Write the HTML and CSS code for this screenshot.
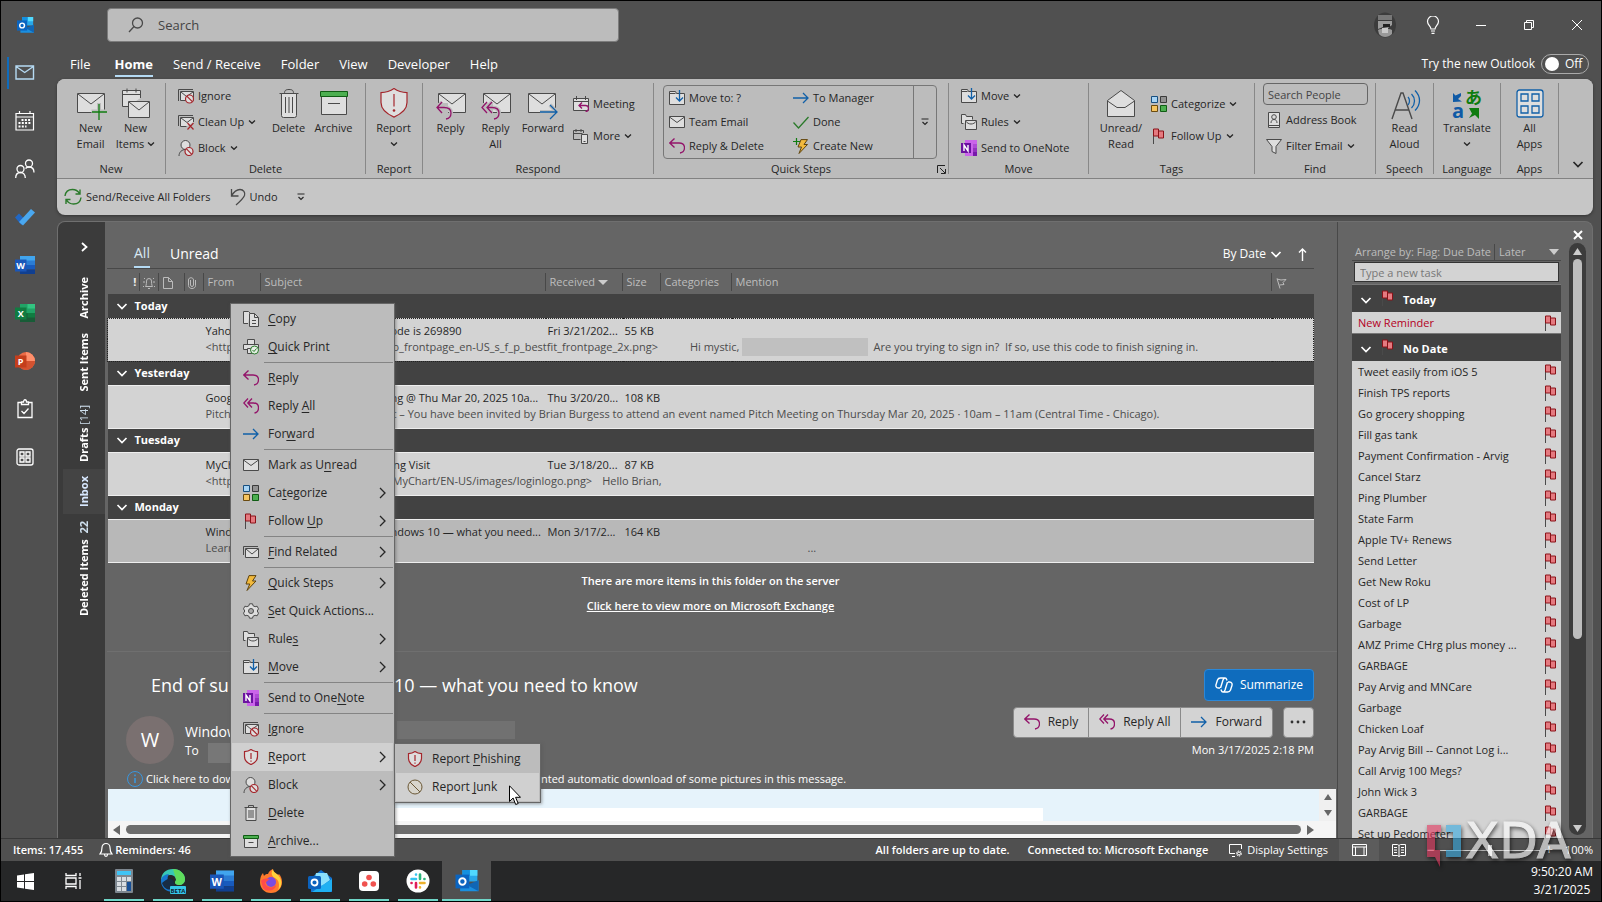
FILE: index.html
```html
<!DOCTYPE html>
<html lang="en">
<head>
<meta charset="utf-8">
<title>Inbox - Outlook</title>
<link rel="stylesheet" href="styles.css">
</head>
<body>
<svg class="defs" aria-hidden="true">
  <symbol id="env" viewBox="0 0 16 16"><path d="M.5 2.500h15v11H.5z" class="f"/><path d="M.5 3l7.500 5.500L15.500 3" class="n"/></symbol>
  <symbol id="reply" viewBox="0 0 16 16"><path d="M5.500 .5L.8 5l4.700 4.500M1 5h9c3.500 0 5.500 2 5.500 4.700 0 3-1.500 4.800-4.500 5.300" class="mg"/></symbol>
  <symbol id="replyall" viewBox="0 0 16 16"><path d="M5 .5L.8 5 5 9.500M9 .5L4.800 5 9 9.500M5 5h5.500c3 0 5 2 5 4.700 0 3-1.500 4.800-4 5.300" class="mg"/></symbol>
  <symbol id="fwd" viewBox="0 0 16 16"><path d="M0 8h15M10 3l5 5-5 5" class="bl"/></symbol>
  <symbol id="flag" viewBox="0 0 16 16"><path d="M2.500 1v15" class="n"/><path d="M2.500 1h5v7h-5zM7.500 3h5v7h-5z" class="rf"/></symbol>
  <symbol id="cats" viewBox="0 0 16 16"><path d="M.5.500h6v6h-6z" fill="#a8d4f5" stroke="#174f80"/><path d="M9.500.500h6v6h-6z" fill="#929292" stroke="#3a3a3a"/><path d="M.5 9.500h6v6h-6z" fill="#f5c460" stroke="#6a4b10"/><path d="M9.500 9.500h6v6h-6z" fill="#4caf50" stroke="#105c14"/></symbol>
  <symbol id="shield" viewBox="0 0 16 16"><path d="M8 .6c2 1.500 4 2 6.500 2v5c0 4-3 6.500-6.500 8-3.500-1.500-6.500-4-6.500-8v-5c2.500 0 4.500-.5 6.500-2z" class="rd" fill="#dedede"/><path d="M8 4v6M8 11.500v1.200" class="rd"/></symbol>
  <symbol id="shieldbig" viewBox="0 0 28 30"><path d="M14 .6c3.500 2.500 7 4 13 4v10c0 7-6 11.500-13 14.500C7 26.100 1 21.600 1 14.600v-10c6 0 9.500-1.500 13-4z" class="rd" fill="#dedede"/><path d="M14 6v12.500" class="rd" stroke-width="2"/><circle cx="14" cy="22.500" r="1.300" fill="#a4262c"/></symbol>
  <symbol id="ignore" viewBox="0 0 16 16"><path d="M.5 13V1.500H15" class="n"/><path d="M2.500 3.500h13v9h-13z" class="f"/><path d="M3 4l5.500 4.500L15 4" class="n"/><circle cx="11.500" cy="11" r="4" class="rd" fill="#dedede"/><path d="M8.800 8.200l5.500 5.500" class="rd"/></symbol>
  <symbol id="clean" viewBox="0 0 16 16"><path d="M.5 12V1.500H15" class="n"/><path d="M15.500 8V3.500h-13v9h6" class="f"/><path d="M3 4l6 4.500L15 4" class="n"/><path d="M9.500 9l6 6.500M15.500 9l-6 6.500" class="rd"/></symbol>
  <symbol id="block" viewBox="0 0 16 16"><circle cx="7.500" cy="5" r="4.500" class="f"/><path d="M1 16c0-4 3-6.500 6.500-6.500" class="n"/><circle cx="11" cy="11.500" r="4" class="rd" fill="#dedede"/><path d="M8.200 8.700l5.600 5.600" class="rd"/></symbol>
  <symbol id="trash" viewBox="0 0 16 16"><path d="M5.500 2.500V.5h5v2M1.500 2.500h13" class="n"/><path d="M3 2.500h10v13H3z" class="f"/><path d="M6 5v8M8 5v8M10 5v8" class="n"/></symbol>
  <symbol id="trashbig" viewBox="0 0 20 30"><path d="M5.500 4.500c0-3 1-4 4.500-4s4.500 1 4.500 4M.5 4.500h19" class="n"/><path d="M2.500 4.500h15v22a2 2 0 0 1-2 2h-11a2 2 0 0 1-2-2z" class="f"/><path d="M6.500 8v16M10 8v16M13.500 8v16" class="n"/></symbol>
  <symbol id="arch" viewBox="0 0 16 16"><path d="M1.500 5.500h13v9h-13z" class="f"/><path d="M.5 2.500h15v3H.5z" fill="#4caf50" stroke="#105c14"/><path d="M5.500 9.500h5" class="n"/></symbol>
  <symbol id="archbig" viewBox="0 0 28 28"><path d="M1.500 7.500h25v18h-25z" class="f"/><path d="M.5 2.500h27v5H.5z" fill="#4caf50" stroke="#105c14"/><path d="M8 14.500h12" class="n"/></symbol>
  <symbol id="moveto" viewBox="0 0 16 16"><path d="M.5 14.500V1.500h6l1 2h8v11z" class="f"/><path d="M.5 3.500h6" class="n"/><path d="M10.500 0v11M7 7.500l3.500 3.500L14 7.500" class="bl"/></symbol>
  <symbol id="rules" viewBox="0 0 16 16"><path d="M2.500 9.500h-2v-9h4l1 2h6v3" class="f"/><path d="M4.500 6.500h11v9h-11z" class="f"/><path d="M4.500 7c3 4 8 4 11 0" class="n"/></symbol>
  <symbol id="onenote" viewBox="0 0 16 16"><path d="M4 0h12v16H4z" fill="#ca64ea"/><path d="M12 4h4v4h-4z" fill="#ae4bd5"/><path d="M12 8h4v4h-4z" fill="#9332bf"/><path d="M12 12h4v4h-4z" fill="#7719aa"/><path d="M0 3h10v10H0z" fill="#6b12a0"/><path d="M3 11V5l4 6V5" fill="none" stroke="#fff" stroke-width="1.400"/></symbol>
  <symbol id="bolt" viewBox="0 0 16 16"><path d="M6 .6h7L9.500 6h3.500L4 15.500 6.800 9H3z" fill="#f2b93c" stroke="#5e430d"/></symbol>
  <symbol id="boltplus" viewBox="0 0 16 16"><path d="M8 1.600h6.500L11 6.500h3.500L6 15.500 8.500 9H5z" fill="#f2b93c" stroke="#5e430d"/><path d="M0 3.500h7M3.500 0v7" stroke="#107c10" stroke-width="1.200"/></symbol>
  <symbol id="check" viewBox="0 0 16 16"><path d="M.5 8.500L5.500 14 15.500 3" fill="none" stroke="#2b7a2b" stroke-width="1.300"/></symbol>
  <symbol id="meeting" viewBox="0 0 16 16"><path d="M.5 2.500h15v12H.5zM.5 5.500h15M3.500 0v4M12.500 0v4" class="f"/><path d="M9 6.500L6 9.500l3 3M6.500 9.500h6c2 0 3 1 3 3s-1 3-3 3" class="mg"/></symbol>
  <symbol id="moreic" viewBox="0 0 16 16"><path d="M7.500 11.500h-7v-9h10V5M.5 5.500h9M3 1v3M8 1v3" class="n"/><path d="M8.500 6.500h6v9h-6z" class="f"/><path d="M10.500 13.500h2" class="n"/></symbol>
  <symbol id="book" viewBox="0 0 16 16"><path d="M2.500.500h11v15h-11z" class="f"/><path d="M2.500 13.500h11M5 11c0-2 1-3.500 3-3.500s3 1.500 3 3.500" class="n"/><circle cx="8" cy="5" r="2.300" class="n"/></symbol>
  <symbol id="funnel" viewBox="0 0 16 16"><path d="M.5 1.500h15L10 8.500v7l-4-2v-5z" class="f"/></symbol>
  <symbol id="copy" viewBox="0 0 16 16"><path d="M5 12.500H.5V.5h5L7 2" class="f"/><path d="M6.500 2.500h5l4 4v9h-9z" class="f"/><path d="M11.500 2.500v4h4M9 9.500h4M9 12.500h4" class="n"/></symbol>
  <symbol id="print" viewBox="0 0 16 16"><path d="M4.500 5V.5h7V5M4 10.500H.5v-5h15V10" class="f"/><path d="M4.500 9.500h7v5h-7z" class="f"/><circle cx="11.500" cy="11" r="4" fill="#e5efe5" stroke="#2b7a2b"/><path d="M9.500 11l1.500 1.500 2.500-3" fill="none" stroke="#2b7a2b"/></symbol>
  <symbol id="related" viewBox="0 0 16 16"><path d="M.5 11V2.500H15" class="n"/><path d="M2.500 4.500h13v9h-13z" class="f"/><path d="M3 5l6 5 6-5" class="n"/></symbol>
  <symbol id="gear" viewBox="0 0 16 16"><path d="M6.500.800h3l.6 2 2 .9 2-.5 1.400 2.600L14.200 8l1.300 2.200-1.400 2.600-2-.5-2 .9-.6 2h-3l-.6-2-2-.9-2 .5L.5 10.200 1.800 8 .5 5.800l1.400-2.600 2 .5 2-.9z" class="f"/><circle cx="8" cy="8" r="2.500" fill="#aaa" stroke="#4a4a4a"/></symbol>
  <symbol id="junk" viewBox="0 0 16 16"><circle cx="8" cy="8" r="7" fill="#d8d5cc" stroke="#6b5836"/><path d="M3 3l10 10" stroke="#6b5836" fill="none"/></symbol>
  <symbol id="dn" viewBox="0 0 8 8"><path d="M1 2.500l3 2.800L7 2.500" fill="none" stroke="currentColor" stroke-width="1.300"/></symbol>
  <symbol id="rt" viewBox="0 0 8 12"><path d="M1 1l5 5-5 5" fill="none" stroke="currentColor" stroke-width="1.300"/></symbol>
  <symbol id="dnw" viewBox="0 0 12 12"><path d="M1.500 4L6 8.500 10.500 4" fill="none" stroke="currentColor" stroke-width="1.700"/></symbol>
  <symbol id="bar-dn" viewBox="0 0 8 8"><path d="M.5 1h7M1.500 4L4 6.500 6.500 4" fill="none" stroke="currentColor" stroke-width="1.200"/></symbol>
  <symbol id="word" viewBox="0 0 20 18"><path d="M5 0h15v5H5z" fill="#41a5ee"/><path d="M5 4.500h15V9H5z" fill="#2b7cd3"/><path d="M5 9h15v4.500H5z" fill="#185abd"/><path d="M5 13.500h15V18H5z" fill="#103f91"/><path d="M0 3.500h11.500v12H0z" fill="#1a56b8"/></symbol>
  <symbol id="excel" viewBox="0 0 20 18"><path d="M5 0h15v9H5z" fill="#21a366"/><path d="M12.500 0H20v4.500h-7.500z" fill="#33c481"/><path d="M5 9h15v9H5z" fill="#185c37"/><path d="M12.500 9H20v4.500h-7.500z" fill="#107c41"/><path d="M0 3.500h11.500v12H0z" fill="#107c41"/></symbol>
  <symbol id="ppt" viewBox="0 0 20 18"><circle cx="11" cy="9" r="9" fill="#ed6c47"/><path d="M11 0a9 9 0 0 1 9 9h-9z" fill="#ff8f6b"/><path d="M20 9a9 9 0 0 1-18 0z" fill="#d35230"/><path d="M0 3.500h11.500v12H0z" fill="#c43e1c"/></symbol>
  <symbol id="olk" viewBox="0 0 20 20"><path d="M6 0h13v10H6z" fill="#28a8ea"/><path d="M12.500 0H19v5h-6.500z" fill="#50d9ff"/><path d="M6 0h6.500v5H6z" fill="#1490df"/><path d="M4 10l8 4 8-5v9.500H4z" fill="#1a8fe0"/><path d="M20 9v9.500L10 13z" fill="#1066b5"/><path d="M0 4h12v12H0z" fill="#0a64c0"/><circle cx="6" cy="10" r="2.800" fill="none" stroke="#fff" stroke-width="1.700"/></symbol>
</svg>

<div class="window">
<div class="app">
  <nav class="rail" aria-label="Apps">
    <span class="logo"><svg width="17" height="17"><use href="#olk"/></svg></span>
    <button class="on" aria-label="Mail"><svg width="20" height="16" viewBox="0 0 20 16" fill="none" stroke="#b5daf3" stroke-width="1.400"><path d="M1 1h17.500v13H1zM1 1.500l8.700 6 8.700-6"/></svg></button>
    <button aria-label="Calendar"><svg width="20" height="20" viewBox="0 0 20 20" fill="none" stroke="#fff" stroke-width="1.200"><path d="M1 2.500h17.500V19H1zM1 6h17.500M4.500 0v3M15 0v3"/><path d="M6.500 9h10M3.500 12h13M3.500 15.500h8" stroke-width="2" stroke-dasharray="2 1.300"/></svg></button>
    <button aria-label="People"><svg width="20" height="20" viewBox="0 0 20 20" fill="none" stroke="#fff" stroke-width="1.300"><circle cx="14" cy="4.500" r="3.500"/><circle cx="5.500" cy="10" r="3.500"/><path d="M.7 19c0-3.500 2-5.500 4.800-5.500s4.800 2 4.800 5.500M10.500 9.500C11.500 8.500 12.500 8 14 8c3 0 5 2 5 5.500"/></svg></button>
    <button aria-label="To Do"><svg width="20" height="18" viewBox="0 0 20 18"><path d="M0 9.500l4-4 6 6-3.500 5.500z" fill="#2167c4"/><path d="M4 14L16 1l4 3.500L8 17.500z" fill="#4aa8f0"/></svg></button>
    <button aria-label="Word"><svg width="20" height="18" viewBox="0 0 20 18"><use href="#word" width="20" height="18"/><text x="5.700" y="13" class="lg">W</text></svg></button>
    <button aria-label="Excel"><svg width="20" height="18" viewBox="0 0 20 18"><use href="#excel" width="20" height="18"/><text x="5.700" y="13" class="lg">X</text></svg></button>
    <button aria-label="PowerPoint"><svg width="20" height="18" viewBox="0 0 20 18"><use href="#ppt" width="20" height="18"/><text x="5.700" y="13" class="lg">P</text></svg></button>
    <button aria-label="Tasks"><svg width="16" height="20" viewBox="0 0 16 20" fill="none" stroke="#fff" stroke-width="1.300"><path d="M4 3.500H1v15h14v-15h-3M4.500 5.500v-2.500h2c0-3 3-3 3 0h2v2.500zM4.500 12l2.500 2.500 4.500-5"/></svg></button>
    <button aria-label="More apps"><svg width="18" height="18" viewBox="0 0 18 18" fill="none" stroke="#fff" stroke-width="1.300"><rect x="1" y="1" width="16" height="16" rx="2"/><path d="M4 4h4v4H4zM10 4h4v4h-4zM4 10h4v4H4zM10 10h4v4h-4z"/></svg></button>
  </nav>

  <div class="content">
    <header class="titlebar">
      <label class="search"><svg width="16" height="16" viewBox="0 0 16 16" fill="none" stroke="#4a4a4a" stroke-width="1.300"><circle cx="9.500" cy="6" r="5"/><path d="M6 9.500L1 15"/></svg><input type="text" placeholder="Search" aria-label="Search"></label>
      <div class="winctl">
        <span class="photo"><svg width="24" height="26" viewBox="0 0 24 26"><ellipse cx="12" cy="13" rx="11" ry="12.500" fill="#3c3c3c"/><path d="M5 3h14v5H5z" fill="#777"/><path d="M5 9h14v4l-4 3-5-1-5 2z" fill="#9c9c9c"/><path d="M10 12h7v3h-7z" fill="#222"/><path d="M5 18c4-2 10-2 14 0v4c-4 4-10 4-13 0z" fill="#999"/><path d="M9 16h6v5H9z" fill="#c9c9c9"/></svg></span>
        <button aria-label="Tips"><svg width="14" height="18" viewBox="0 0 14 18" fill="none" stroke="#fff" stroke-width="1.200"><path d="M5 13c0-3-3.500-4-3.500-7.500a5.500 5.500 0 0 1 11 0C12.500 9 9 10 9 13zM5 15h4M5.500 17.300h3"/></svg></button>
        <button aria-label="Minimize"><svg width="10" height="10" viewBox="0 0 10 10" stroke="#fff"><path d="M0 5.500h10"/></svg></button>
        <button aria-label="Restore"><svg width="10" height="10" viewBox="0 0 10 10" fill="none" stroke="#fff"><path d="M.5 2.500h7v7h-7zM2.500 2V.5h7v7H8"/></svg></button>
        <button aria-label="Close"><svg width="10" height="10" viewBox="0 0 10 10" stroke="#fff"><path d="M0 0l10 10M10 0L0 10"/></svg></button>
      </div>
    </header>
    <div class="tabs">
      <button>File</button><button class="on">Home</button><button>Send / Receive</button><button>Folder</button><button>View</button><button>Developer</button><button>Help</button>
      <label class="try">Try the new Outlook <span class="toggle"><input type="checkbox" aria-label="Try the new Outlook"><span>Off</span></span></label>
    </div>

    <section class="ribbon">
      <div class="groups">
        <div class="group g-new"><div class="tools">
          <button class="big"><svg width="32" height="32" viewBox="0 0 32 32"><path d="M2.500 5.500h27v19h-27z" class="f"/><path d="M3 6l13 10L29 6" class="n"/><path d="M24 15v17M16.500 23.500h16" stroke="#bcbcbc" stroke-width="4"/><path d="M24 16v16M17 24h15" stroke="#107c10" stroke-width="1.300"/></svg>New<br>Email</button>
          <button class="big"><svg width="32" height="32" viewBox="0 0 32 32"><path d="M8 18.500H2.500v-16h18V10M2.500 6.500h18M7 .5v4M16 .5v4" class="f"/><path d="M8.500 13.500h21v16h-21z" class="f"/><path d="M9 14l10 8 10-8" class="n"/></svg>New<br>Items <svg width="8" height="8"><use href="#dn"/></svg></button>
        </div><h2>New</h2></div>
        <div class="group g-del"><div class="tools">
          <div class="col"><button><svg width="16" height="16"><use href="#ignore"/></svg>Ignore</button><button><svg width="16" height="16"><use href="#clean"/></svg>Clean Up <svg width="8" height="8"><use href="#dn"/></svg></button><button><svg width="16" height="16"><use href="#block"/></svg>Block <svg width="8" height="8"><use href="#dn"/></svg></button></div>
          <button class="big"><svg width="32" height="32" viewBox="-6 -1 32 32"><use href="#trashbig" width="20" height="30"/></svg>Delete</button>
          <button class="big"><svg width="32" height="32" viewBox="-2 -1 32 32"><use href="#archbig" width="28" height="28"/></svg>Archive</button>
        </div><h2>Delete</h2></div>
        <div class="group g-rep"><div class="tools">
          <button class="big"><svg width="32" height="32" viewBox="-2 0 32 32"><use href="#shieldbig" width="28" height="30"/></svg>Report<br><svg width="8" height="8"><use href="#dn"/></svg></button>
        </div><h2>Report</h2></div>
        <div class="group g-resp"><div class="tools">
          <button class="big"><svg width="32" height="32" viewBox="0 0 32 32"><path d="M3.500 5.500h27v19h-27z" class="f"/><path d="M4 6l13 10L30 6" class="n"/><path d="M1 15h12v12H1z" fill="#bcbcbc"/><path d="M7 14l-5 5.500L7 25M2 19.500h7c5 0 7 2 7 5.500s-2 5.500-5 6" fill="none" stroke="#bcbcbc" stroke-width="4"/><path d="M7 14l-5 5.500L7 25M2 19.500h7c5 0 7 2 7 5.500s-2 5.500-5 6" class="mg"/></svg>Reply</button>
          <button class="big"><svg width="32" height="32" viewBox="0 0 32 32"><path d="M3.500 5.500h27v19h-27z" class="f"/><path d="M4 6l13 10L30 6" class="n"/><path d="M1 15h12v12H1z" fill="#bcbcbc"/><path d="M12 14l-5 5.500 5 5.500M7 19.500h5c5 0 7 2 7 5.500s-2 5.500-5 6" fill="none" stroke="#bcbcbc" stroke-width="4"/><path d="M7 14l-5 5.500L7 25M12 14l-5 5.500 5 5.500M7 19.500h5c5 0 7 2 7 5.500s-2 5.500-5 6" class="mg"/></svg>Reply<br>All</button>
          <button class="big wide"><svg width="32" height="32" viewBox="0 0 32 32"><path d="M1.500 5.500h27v19h-27z" class="f"/><path d="M2 6l13 10L28 6" class="n"/><path d="M13 24h17M23 17l7 7-7 7" stroke="#bcbcbc" stroke-width="4" fill="none"/><path d="M13 24h17M23 17l7 7-7 7" class="bl"/></svg>Forward</button>
          <div class="col two"><button><svg width="16" height="16"><use href="#meeting"/></svg>Meeting</button><button><svg width="16" height="16"><use href="#moreic"/></svg>More <svg width="8" height="8"><use href="#dn"/></svg></button></div>
        </div><h2>Respond</h2></div>
        <div class="group g-qs"><div class="tools"><div class="gallery">
          <button><svg width="16" height="16"><use href="#moveto"/></svg>Move to: ?</button><button><svg width="16" height="16"><use href="#fwd"/></svg>To Manager</button>
          <button><svg width="16" height="16"><use href="#env"/></svg>Team Email</button><button><svg width="16" height="16"><use href="#check"/></svg>Done</button>
          <button><svg width="16" height="16"><use href="#reply"/></svg>Reply &amp; Delete</button><button><svg width="16" height="16"><use href="#boltplus"/></svg>Create New</button>
          <button class="drop" aria-label="More quick steps"><svg width="8" height="8"><use href="#bar-dn"/></svg></button>
        </div></div><h2>Quick Steps<svg class="launch" width="9" height="9" viewBox="0 0 9 9" fill="none" stroke="#222"><path d="M.5 8V.5H8M3 3l5 5M8.500 4v4.500H4"/></svg></h2></div>
        <div class="group g-move"><div class="tools"><div class="col">
          <button><svg width="16" height="16"><use href="#moveto"/></svg>Move <svg width="8" height="8"><use href="#dn"/></svg></button><button><svg width="16" height="16"><use href="#rules"/></svg>Rules <svg width="8" height="8"><use href="#dn"/></svg></button><button><svg width="16" height="16"><use href="#onenote"/></svg>Send to OneNote</button></div>
        </div><h2>Move</h2></div>
        <div class="group g-tags"><div class="tools">
          <button class="big wide"><svg width="32" height="32" viewBox="0 0 32 32"><path d="M2.500 12.500L16 2.500l13.500 10v16h-27z" class="f"/><path d="M2.500 13L12 19.500h8L29.500 13" class="n"/></svg>Unread/<br>Read</button>
          <div class="col two"><button><svg width="16" height="16"><use href="#cats"/></svg>Categorize <svg width="8" height="8"><use href="#dn"/></svg></button><button><svg width="16" height="16"><use href="#flag"/></svg>Follow Up <svg width="8" height="8"><use href="#dn"/></svg></button></div>
        </div><h2>Tags</h2></div>
        <div class="group g-find"><div class="tools"><div class="col">
          <input class="people" type="text" placeholder="Search People" aria-label="Search People"><button><svg width="16" height="16"><use href="#book"/></svg>Address Book</button><button><svg width="16" height="16"><use href="#funnel"/></svg>Filter Email <svg width="8" height="8"><use href="#dn"/></svg></button></div>
        </div><h2>Find</h2></div>
        <div class="group g-sp"><div class="tools"><button class="big"><svg width="32" height="32" viewBox="0 0 32 32" fill="none"><path d="M3 31L12 5h2l9 26M6.500 22h13" stroke="#4a4a4a" stroke-width="1.400"/><path d="M19 9c2 2 2 6 0 8M22.500 6c4 4 4 10 0 14M26 2.500c6 6 6 14 0 20" class="bl"/></svg>Read<br>Aloud</button></div><h2>Speech</h2></div>
        <div class="group g-la"><div class="tools"><button class="big wide"><svg class="tr" width="32" height="32" viewBox="0 0 32 32"><text x="1" y="30" class="tr-a">a</text><text x="14" y="16" class="tr-j">あ</text><path d="M2 14V5l2.500 2.500L10 5v3L7 11l4 2.500z" fill="#0f5aa6"/><path d="M18 20h10v11l-4-4-6 3 3-4.500z" fill="#107c10"/></svg>Translate<br><svg width="8" height="8"><use href="#dn"/></svg></button></div><h2>Language</h2></div>
        <div class="group g-ap"><div class="tools"><button class="big"><svg width="32" height="32" viewBox="0 0 32 32" fill="#dedede" stroke="#1160a8" stroke-width="1.300"><rect x="3" y="2" width="26" height="27" rx="2.500"/><path d="M7 6h7v7H7zM18 6h7v7h-7zM7 18h7v7H7zM18 18h7v7h-7z"/></svg>All<br>Apps</button></div><h2>Apps</h2></div>
        <button class="collapse" aria-label="Collapse ribbon"><svg width="12" height="12"><use href="#dnw"/></svg></button>
      </div>
      <div class="qat"><button><svg width="18" height="18" viewBox="0 0 18 18" fill="none" stroke="#2b7a2b" stroke-width="1.400"><path d="M1 8c.5-4 3.500-6.500 7.500-6.500 3 0 5.500 1.500 7 4M16 1.500v4.500h-4.500M17 9.500c-.5 4-3.500 6.500-7.500 6.500-3 0-5.500-1.500-7-4M2 16v-4.500h4.500"/></svg>Send/Receive All Folders</button><button><svg width="16" height="18" viewBox="0 0 16 18" fill="none" stroke="#4a4a4a" stroke-width="1.300"><path d="M1.500 1v7h7M1.500 8C4 3.500 7 1.500 10 1.500c3.500 0 5.500 3 4.500 6C13.500 10 10 13.500 6 17"/></svg>Undo</button><button aria-label="Customize"><svg width="8" height="8"><use href="#bar-dn"/></svg></button></div>
    </section>

    <div class="panel">
      <nav class="folders" aria-label="Folders">
        <button class="exp" aria-label="Expand"><svg width="7" height="10" viewBox="0 0 7 10"><path d="M1 1l4.500 4L1 9" fill="none" stroke="#fff" stroke-width="1.800"/></svg></button>
        <button>Archive</button><button>Sent Items</button><button>Drafts <span class="cnt">[14]</span></button><button class="on">Inbox</button><button>Deleted Items&nbsp; <span>22</span></button>
      </nav>
      <main class="mail">
        <section class="list">
          <div class="filter"><button class="on">All</button><button>Unread</button><button class="sort">By Date <svg width="12" height="12"><use href="#dnw"/></svg></button><button class="dir" aria-label="Sort direction"><svg width="9" height="13" viewBox="0 0 9 13" fill="none" stroke="#fff" stroke-width="1.400"><path d="M4.500 13V1M1 4.500L4.500 1 8 4.500"/></svg></button></div>
          <table>
            <colgroup><col class="c32"><col class="c19"><col class="c26"><col class="c19"><col class="c57"><col class="c285"><col class="c77"><col class="c38"><col class="c71"><col><col class="c42"></colgroup>
            <thead><tr><th class="imp">!</th><th class="ic"><svg width="12" height="12" viewBox="0 0 12 12" fill="none" stroke="#bbb"><path d="M2.500 9.500c1-1 1-5 1-5.500a2.500 2.500 0 0 1 5 0c0 .5 0 4.500 1 5.500zM0 9.500h1M11 9.500h1M0 5h2M10 5h2M1 1l1 1M11 1l-1 1M5 11.500h2"/></svg></th><th><svg width="10" height="12" viewBox="0 0 10 12" fill="none" stroke="#bbb"><path d="M.5.500h5l4 4v7h-9zM5.500.500v4h4"/></svg></th><th class="ic"><svg width="8" height="12" viewBox="0 0 8 12" fill="none" stroke="#bbb"><path d="M2.500 3v5c0 2 3 2 3 0V3c0-3-5-3-5 0v5.500c0 4 7 4 7 0V3"/></svg></th><th>From</th><th>Subject</th><th>Received <svg width="10" height="7" viewBox="0 0 10 7"><path d="M0 0h10L5 5z" fill="#ccc"/></svg></th><th>Size</th><th>Categories</th><th>Mention</th><th><svg width="11" height="11" viewBox="0 0 11 11" fill="none" stroke="#bbb"><path d="M1 .5l3 10M1 1l4 1 5-.5-3 3 1 2-4.500.5"/></svg></th></tr></thead>
            <tbody class="grp"><tr><td colspan="11"><svg width="12" height="12"><use href="#dnw"/></svg>Today</td></tr></tbody>
            <tbody class="msg focus"><tr><td colspan="4"></td><td>Yahoo</td><td class="subj">ode is 269890</td><td>Fri 3/21/202...</td><td>55 KB</td><td colspan="3"></td></tr>
              <tr><td colspan="4"></td><td colspan="7"><div class="snip"><span class="lead">&lt;https</span><span>o_frontpage_en-US_s_f_p_bestfit_frontpage_2x.png&gt;</span><span class="gap">Hi mystic,</span><i class="redact"></i><span>Are you trying to sign in?&nbsp; If so, use this code to finish signing in.</span></div></td></tr></tbody>
            <tbody class="grp"><tr><td colspan="11"><svg width="12" height="12"><use href="#dnw"/></svg>Yesterday</td></tr></tbody>
            <tbody class="msg"><tr><td colspan="4"></td><td>Google</td><td class="subj">ng @ Thu Mar 20, 2025 10a...</td><td>Thu 3/20/20...</td><td>108 KB</td><td colspan="3"></td></tr>
              <tr><td colspan="4"></td><td colspan="7"><div class="snip"><span class="lead">Pitch</span><span>t – You have been invited by Brian Burgess to attend an event named Pitch Meeting on Thursday Mar 20, 2025 · 10am – 11am (Central Time - Chicago).</span></div></td></tr></tbody>
            <tbody class="grp"><tr><td colspan="11"><svg width="12" height="12"><use href="#dnw"/></svg>Tuesday</td></tr></tbody>
            <tbody class="msg"><tr><td colspan="4"></td><td>MyCh</td><td class="subj">ing Visit</td><td>Tue 3/18/20...</td><td>87 KB</td><td colspan="3"></td></tr>
              <tr><td colspan="4"></td><td colspan="7"><div class="snip"><span class="lead">&lt;https</span><span>MyChart/EN-US/images/loginlogo.png&gt;</span><span class="gap2">Hello Brian,</span></div></td></tr></tbody>
            <tbody class="grp"><tr><td colspan="11"><svg width="12" height="12"><use href="#dnw"/></svg>Monday</td></tr></tbody>
            <tbody class="msg sel"><tr><td colspan="4"></td><td>Wind</td><td class="subj">ndows 10 — what you need...</td><td>Mon 3/17/2...</td><td>164 KB</td><td colspan="3"></td></tr>
              <tr><td colspan="4"></td><td colspan="7"><div class="snip"><span class="lead">Learn</span><span class="dots">...</span></div></td></tr></tbody>
          </table>
          <div class="more"><p>There are more items in this folder on the server</p><a href="#">Click here to view more on Microsoft Exchange</a></div>
        </section>
        <section class="read">
          <div class="subjectline"><h1><span>End of su</span>10 — what you need to know</h1><button class="sum"><svg width="18" height="16" viewBox="0 0 18 16" fill="none" stroke="#fff" stroke-width="1.400"><path d="M5 11H3.500C1 11 .5 9 1.200 7L2.500 3C3 1.500 4 1 5.500 1H10c1.500 0 1.500 1 2 2.500M5.500 11L8 3M13 5h1.500C17 5 17.500 7 16.800 9l-1.300 4c-.5 1.500-1.500 2-3 2H8c-1.500 0-1.500-1-2-2.500M12.500 5L10 13M8 3c.5-1.500 1-2 2-2M10 13c-.5 1.500-1 2-2 2"/></svg>Summarize</button></div>
          <div class="head">
            <span class="avatar">W</span>
            <div class="who"><p class="name"><span>Windows</span><i></i></p><p class="to">To <i></i></p></div>
            <div class="acts"><div class="btns"><div class="seg"><button><svg width="16" height="16"><use href="#reply"/></svg>Reply</button><button><svg width="16" height="16"><use href="#replyall"/></svg>Reply All</button><button><svg width="16" height="16"><use href="#fwd"/></svg>Forward</button></div><button class="dotb" aria-label="More actions"><svg width="16" height="4" viewBox="0 0 16 4" fill="#333"><circle cx="2" cy="2" r="1.400"/><circle cx="8" cy="2" r="1.400"/><circle cx="14" cy="2" r="1.400"/></svg></button></div><time>Mon 3/17/2025 2:18 PM</time></div>
          </div>
          <p class="info"><svg width="18" height="18" viewBox="0 0 18 18" fill="none" stroke="#3a96dd"><circle cx="9" cy="9" r="7.500"/><path d="M9 8v5M9 4.500v1.800" stroke-width="1.600"/></svg><span class="i1">Click here to download</span><span>nted automatic download of some pictures in this message.</span></p>
          <div class="body"><div class="page"><div class="sheet"></div></div><div class="vs"><svg width="8" height="6" viewBox="0 0 8 6"><path d="M0 6l4-6 4 6z" fill="#666"/></svg><svg width="8" height="6" viewBox="0 0 8 6"><path d="M0 0l4 6 4-6z" fill="#666"/></svg></div></div>
          <div class="hs"><svg width="7" height="10" viewBox="0 0 7 10"><path d="M7 0L0 5l7 5z" fill="#666"/></svg><div class="thumb"></div><svg width="7" height="10" viewBox="0 0 7 10"><path d="M0 0l7 5-7 5z" fill="#666"/></svg></div>
        </section>
      </main>
      <aside class="tasks">
        <div class="arr"><span>Arrange by: Flag: Due Date</span><span class="later">Later</span><svg width="10" height="6" viewBox="0 0 10 6"><path d="M0 0h10L5 6z" fill="#ccc"/></svg></div>
        <input class="newtask" type="text" placeholder="Type a new task" aria-label="Type a new task">
        <h3><svg width="12" height="12"><use href="#dnw"/></svg><svg class="rflag" width="16" height="16"><use href="#flag"/></svg>Today</h3>
        <ul><li class="due">New Reminder<svg width="16" height="16"><use href="#flag"/></svg></li></ul>
        <h3><svg width="12" height="12"><use href="#dnw"/></svg><svg class="rflag" width="16" height="16"><use href="#flag"/></svg>No Date</h3>
        <ul class="rest">
          <li>Tweet easily from iOS 5<svg width="16" height="16"><use href="#flag"/></svg></li>
          <li>Finish TPS reports<svg width="16" height="16"><use href="#flag"/></svg></li>
          <li>Go grocery shopping<svg width="16" height="16"><use href="#flag"/></svg></li>
          <li>Fill gas tank<svg width="16" height="16"><use href="#flag"/></svg></li>
          <li>Payment Confirmation - Arvig<svg width="16" height="16"><use href="#flag"/></svg></li>
          <li>Cancel Starz<svg width="16" height="16"><use href="#flag"/></svg></li>
          <li>Ping Plumber<svg width="16" height="16"><use href="#flag"/></svg></li>
          <li>State Farm<svg width="16" height="16"><use href="#flag"/></svg></li>
          <li>Apple TV+ Renews<svg width="16" height="16"><use href="#flag"/></svg></li>
          <li>Send Letter<svg width="16" height="16"><use href="#flag"/></svg></li>
          <li>Get New Roku<svg width="16" height="16"><use href="#flag"/></svg></li>
          <li>Cost of LP<svg width="16" height="16"><use href="#flag"/></svg></li>
          <li>Garbage<svg width="16" height="16"><use href="#flag"/></svg></li>
          <li>AMZ Prime CHrg plus money ...<svg width="16" height="16"><use href="#flag"/></svg></li>
          <li>GARBAGE<svg width="16" height="16"><use href="#flag"/></svg></li>
          <li>Pay Arvig and MNCare<svg width="16" height="16"><use href="#flag"/></svg></li>
          <li>Garbage<svg width="16" height="16"><use href="#flag"/></svg></li>
          <li>Chicken Loaf<svg width="16" height="16"><use href="#flag"/></svg></li>
          <li>Pay Arvig Bill -- Cannot Log i...<svg width="16" height="16"><use href="#flag"/></svg></li>
          <li>Call Arvig 100 Megs?<svg width="16" height="16"><use href="#flag"/></svg></li>
          <li>John Wick 3<svg width="16" height="16"><use href="#flag"/></svg></li>
          <li>GARBAGE<svg width="16" height="16"><use href="#flag"/></svg></li>
          <li>Set up Pedometer<svg width="16" height="16"><use href="#flag"/></svg></li>
        </ul>
      </aside>
      <div class="tscroll"><button aria-label="Close tasks"><svg width="10" height="10" viewBox="0 0 10 10" stroke="#fff" stroke-width="2"><path d="M1 1l8 8M9 1L1 9"/></svg></button><div class="track"><svg width="9" height="7" viewBox="0 0 9 7"><path d="M0 7l4.500-7L9 7z" fill="#ccc"/></svg><div class="thumb"></div><svg width="9" height="7" viewBox="0 0 9 7"><path d="M0 0l4.500 7L9 0z" fill="#ccc"/></svg></div></div>
    </div>
  </div>
</div>

<footer class="status">
  <span>Items: 17,455</span><span class="rem"><svg width="14" height="16" viewBox="0 0 14 16" fill="none" stroke="#fff" stroke-width="1.200"><path d="M1 12c1.500-1.500 2-3 2-6.500a4 4 0 0 1 8 0c0 3.500.5 5 2 6.500zM5.500 12.500c0 2.500 3 2.500 3 0"/></svg>Reminders: 46</span>
  <span class="upd">All folders are up to date.</span><span class="conn">Connected to: Microsoft Exchange</span>
  <button class="disp"><svg width="14" height="13" viewBox="0 0 14 13" fill="none" stroke="#fff"><path d="M6 9.500H.5v-9h12V5M3 12.500h3"/><circle cx="10" cy="9.500" r="2.500" stroke-dasharray="1.500 1"/><circle cx="10" cy="9.500" r="1.500"/></svg>Display Settings</button>
  <button class="view on" aria-label="Normal view"><svg width="15" height="12" viewBox="0 0 15 12" fill="none" stroke="#fff"><path d="M.5.500h14v11H.5zM.5 3h14M3.500 3v8.500M12 3v8.500"/></svg></button>
  <button class="view" aria-label="Reading view"><svg width="14" height="13" viewBox="0 0 14 13" fill="none" stroke="#fff"><path d="M7 1.500v11M.5.500h5L7 1.500 8.500.500h5v11h-5L7 12.500 5.500 11.500h-5zM2 3.500h3M2 6h3M2 8.500h3M9 3.500h3M9 6h3M9 8.500h3"/></svg></button>
  <span class="zoom"><span>−</span><input type="range" aria-label="Zoom" value="50"><span>+</span></span><span class="pct">100%</span>
</footer>

<footer class="taskbar">
  <button class="sys" aria-label="Start"><svg width="17" height="17" viewBox="0 0 17 17" fill="#fff"><path d="M0 2.500l7-1V8H0zM8 1.300L17 0v8H8zM0 9h7v6.500l-7-1zM8 9h9v8l-9-1.300z"/></svg></button>
  <button class="sys" aria-label="Task view"><svg width="17" height="16" viewBox="0 0 17 16" fill="none" stroke="#fff" stroke-width="1.300"><path d="M1 0v2.500h10V0M1 16v-2.500h10V16M1 5h10v6H1zM15 0v3M15 7v9M13.500 5h3"/></svg></button>
  <button class="open" aria-label="Calculator"><svg width="18" height="24" viewBox="0 0 18 24"><rect width="18" height="24" rx="1" fill="#7d8790"/><path d="M2 2h14v4H2z" fill="#40c4f5"/><path d="M2 8h4v4H2zM7 8h4v4H7zM12 8h4v4h-4zM2 13h4v4H2zM7 13h4v4H7zM2 18h4v4H2zM7 18h4v4H7z" fill="#d8dde2"/><path d="M12 13h4v9h-4z" fill="#174f96"/></svg></button>
  <button class="open" aria-label="Edge Beta"><svg width="26" height="26" viewBox="0 0 26 26"><path d="M1 13C1 5 6 1 13 1s12 5 12 10c0 4-3 6-6 6-2 0-4-1-4-2.500 0-1 1-1.500 1-3C16 9 13.500 7 10 7 5 7 2 10 1 13z" fill="#38c9b5"/><path d="M13 1c7 0 12 5 12 10 0 4-3 6-6 6-2 0-4-1-4-2.500 0-1 1-1.500 1-3z" fill="#5fdc5c"/><path d="M1 13c0-4 4-7 8-7-2 3-2 8 1 12 2 3 5 4 8 4-8 5-17-1-17-9z" fill="#1777cf"/><path d="M2 15c3-2 5-5 9-4 3 1 4 5 3 8s-9 5-12-4z" fill="#182c44"/><rect x="10" y="18" width="16" height="8" rx="1" fill="#35c6e8"/><text x="18" y="25" class="beta">BETA</text></svg></button>
  <button class="open" aria-label="Word"><svg width="24" height="22" viewBox="0 0 20 18"><use href="#word" width="20" height="18"/><text x="5.700" y="13" class="lg">W</text></svg></button>
  <button class="open" aria-label="Firefox"><svg width="24" height="24" viewBox="0 0 24 24"><path d="M12 24C5 24 1 19 1 13c0-4 1-7 3-9l1 3c1-1.500 2-2 4-2 1-3 3-4 5-5 0 3 3 4 5 6l1-1c2 2 3 5 3 8 0 6-4 11-11 11z" fill="#ff7a2c"/><path d="M14 0c0 3 3 4 5 6 4 4 5 11 0 15 2-5 1-10-3-12-4-2-4-6-2-9z" fill="#ffd23c"/><circle cx="12" cy="13" r="5" fill="#7b4be0"/><path d="M2 12c3-3 6-3 9-1-3 0-3 2-5 3 1 5 8 6 11 2 0 5-9 8-13 3z" fill="#ff4b4b"/></svg></button>
  <button class="open" aria-label="Outlook"><svg width="24" height="23" viewBox="0 0 24 23"><path d="M3 8L13 0l11 8v14H3z" fill="#1272cf"/><path d="M8 3h11l3 7-8 6-8-4z" fill="#8be0fb"/><path d="M4 22L24 9v11a2 2 0 0 1-2 2z" fill="#1fb0f2"/><rect y="6" width="13" height="13" rx="1.500" fill="#0b62bd"/><circle cx="6.500" cy="12.500" r="3" fill="none" stroke="#fff" stroke-width="1.800"/></svg></button>
  <button class="open" aria-label="Asana"><svg width="20" height="20" viewBox="0 0 20 20"><rect width="20" height="20" rx="4" fill="#fff"/><g fill="#f0524f"><circle cx="10" cy="6.500" r="2.800"/><circle cx="5.700" cy="13" r="2.800"/><circle cx="14.300" cy="13" r="2.800"/></g></svg></button>
  <button class="open" aria-label="Slack"><svg width="24" height="24" viewBox="0 0 24 24"><circle cx="12" cy="12" r="11.500" fill="#fff"/><g fill="none" stroke-width="2.600" stroke-linecap="round"><path d="M10 5.500v.1M5.500 10h4.500" stroke="#36c5f0"/><path d="M14 5.500V10M18.500 10h-.1" stroke="#2eb67d"/><path d="M14 18.500v-.1M14 14h4.500" stroke="#ecb22e"/><path d="M10 14v4.500M5.500 14h.1" stroke="#e01e5a"/></g></svg></button>
  <button class="open cur" aria-label="Outlook classic"><svg width="24" height="23"><use href="#olk"/></svg></button>
  <div class="clock">9:50:20 AM<br>3/21/2025</div>
</footer>

<div class="menu ctx" role="menu">
  <button><svg width="16" height="16"><use href="#copy"/></svg><span><u>C</u>opy</span></button>
  <button><svg width="16" height="16"><use href="#print"/></svg><span><u>Q</u>uick Print</span></button>
  <hr>
  <button><svg width="16" height="16"><use href="#reply"/></svg><span><u>R</u>eply</span></button>
  <button><svg width="16" height="16"><use href="#replyall"/></svg><span>Reply <u>A</u>ll</span></button>
  <button><svg width="16" height="16"><use href="#fwd"/></svg><span>For<u>w</u>ard</span></button>
  <hr>
  <button><svg width="16" height="16"><use href="#env"/></svg><span>Mark as U<u>n</u>read</span></button>
  <button><svg width="16" height="16"><use href="#cats"/></svg><span>Ca<u>t</u>egorize</span><svg width="8" height="12"><use href="#rt"/></svg></button>
  <button><svg width="16" height="16"><use href="#flag"/></svg><span>Follow <u>U</u>p</span><svg width="8" height="12"><use href="#rt"/></svg></button>
  <hr>
  <button><svg width="16" height="16"><use href="#related"/></svg><span><u>F</u>ind Related</span><svg width="8" height="12"><use href="#rt"/></svg></button>
  <hr>
  <button><svg width="16" height="16"><use href="#bolt"/></svg><span><u>Q</u>uick Steps</span><svg width="8" height="12"><use href="#rt"/></svg></button>
  <button><svg width="16" height="16"><use href="#gear"/></svg><span><u>S</u>et Quick Actions...</span></button>
  <button><svg width="16" height="16"><use href="#rules"/></svg><span>Rule<u>s</u></span><svg width="8" height="12"><use href="#rt"/></svg></button>
  <button><svg width="16" height="16"><use href="#moveto"/></svg><span><u>M</u>ove</span><svg width="8" height="12"><use href="#rt"/></svg></button>
  <hr>
  <button><svg width="16" height="16"><use href="#onenote"/></svg><span>Send to One<u>N</u>ote</span></button>
  <hr>
  <button><svg width="16" height="16"><use href="#ignore"/></svg><span><u>I</u>gnore</span></button>
  <button class="on"><svg width="16" height="16"><use href="#shield"/></svg><span><u>R</u>eport</span><svg width="8" height="12"><use href="#rt"/></svg></button>
  <button><svg width="16" height="16"><use href="#block"/></svg><span>Block</span><svg width="8" height="12"><use href="#rt"/></svg></button>
  <button><svg width="16" height="16"><use href="#trash"/></svg><span><u>D</u>elete</span></button>
  <button><svg width="16" height="16"><use href="#arch"/></svg><span><u>A</u>rchive...</span></button>
</div>
<div class="menu sub" role="menu">
  <button><svg width="16" height="16"><use href="#shield"/></svg><span>Report <u>P</u>hishing</span></button>
  <button class="on"><svg width="16" height="16"><use href="#junk"/></svg><span>Report <u>J</u>unk</span></button>
</div>
<svg class="cursor" width="12" height="21" viewBox="0 0 12 21"><path d="M.5.800v15.700l3.600-3.500 2.600 6.500 2.500-1-2.600-6.200h4.900z" fill="#fff" stroke="#000"/></svg>
<div class="mark"><svg width="36" height="44" viewBox="0 0 36 44"><path d="M15 1H1v32h8l5 10V26H9V8h6z" fill="#e0335a"/><path d="M20 1h15v32H20v-7h7V8h-7z" fill="#35a9e0"/></svg><span>XDA</span></div>
</div>
</body>
</html>
```
FILE: styles.css
```css
* { box-sizing: border-box; }
body { margin: 0; background: #000; color: #fff; font: 12px/16px "Open Sans", "Noto Sans", sans-serif; }
button, input { font: inherit; color: inherit; background: none; border: 0; padding: 0; margin: 0; white-space: nowrap; }
h1, h2, h3, p, ul { margin: 0; padding: 0; font-weight: 400; list-style: none; }
svg { flex: none; }
.defs { position: absolute; width: 0; height: 0; }
.n { fill: none; stroke: #4a4a4a; }
.f { fill: #dedede; stroke: #4a4a4a; }
.mg { fill: none; stroke: #93146a; stroke-width: 1.3; }
.bl { fill: none; stroke: #1160a8; stroke-width: 1.3; }
.rd { stroke: #a4262c; stroke-width: 1.2; }
.rf { fill: #e57a80; stroke: #8a1218; }
.lg { font: bold 9px "Open Sans", sans-serif; fill: #fff; text-anchor: middle; }
.beta { font: bold 6px "Open Sans", sans-serif; fill: #123; text-anchor: middle; }
.tr { overflow: visible; }
.tr-a { font: bold 20px "Open Sans", sans-serif; fill: #0f5aa6; }
.tr-j { font: bold 17px "Noto Sans CJK JP", sans-serif; fill: #107c10; }

.window { position: relative; display: flex; flex-direction: column; height: 100vh; border: 1px solid #000; background: #505050; overflow: hidden; }
.app { flex: 1; min-height: 0; display: grid; grid-template-columns: 56px 1fr; }
.rail { display: flex; flex-direction: column; }
.rail .logo { display: flex; justify-content: center; align-items: center; height: 48px; width: 48px; }
.rail button { width: 48px; height: 48px; display: flex; justify-content: center; align-items: center; }
.rail .on { background: linear-gradient(#0f6cbd, #0f6cbd) 6px 50% / 2px 32px no-repeat; }
.content { display: flex; flex-direction: column; min-width: 0; min-height: 0; padding-right: 8px; }

.titlebar { display: flex; justify-content: space-between; padding: 7px 0 0 50px; margin-right: -8px; }
.search { display: flex; align-items: center; gap: 14px; width: 512px; height: 34px; padding-left: 20px; background: #bcbcbc; border: 1px solid #7c7c7c; border-radius: 4px; }
.search input { flex: 1; font-size: 13px; outline: 0; }
.search input::placeholder { color: #444; opacity: 1; }
.winctl { display: flex; align-items: center; }
.winctl > * { width: 48px; height: 34px; display: flex; align-items: center; justify-content: center; }

.tabs { display: flex; align-items: flex-end; height: 37px; padding-left: 13px; gap: 20px; font-size: 13px; line-height: 18px; }
.tabs button { height: 28px; padding-top: 4px; border-bottom: 2px solid transparent; margin-bottom: 2px; }
.tabs .on { font-weight: 700; border-color: #b5daf3; margin-left: 4px; }
.try { margin: 0 0 5px auto; display: flex; align-items: center; gap: 6px; padding-right: 4px; font-size: 12px; }
.toggle { display: flex; align-items: center; width: 48px; height: 20px; border: 1px solid #aaa; border-radius: 10px; padding-left: 3px; gap: 6px; }
.toggle input { appearance: none; width: 14px; height: 14px; border-radius: 7px; background: #fff; }

.ribbon { background: #c6c6c6; border-radius: 8px; color: #262626; box-shadow: 0 1px 3px #333; overflow: hidden; flex: none; font-size: 12px; }
.groups { display: flex; background: #bcbcbc; border-bottom: 1px solid #828282; height: 100px; padding-top: 4px; }
.group { flex: none; height: 91px; border-right: 1px solid #888; display: flex; flex-direction: column; }
.tools { flex: 0 0 78px; display: flex; align-items: flex-start; }
.group h2 { flex: none; font-size: 11px; line-height: 16px; text-align: center; position: relative; }
.launch { position: absolute; right: 2px; top: 4px; }
.big { width: 45px; display: block; text-align: center; font-size: 11px; line-height: 16px; padding-top: 5px; }
.big > svg:first-child { display: block; margin: 0 auto; }
.wide { width: 50px; }
.col { display: flex; flex-direction: column; font-size: 11px; }
.col button { display: flex; align-items: center; gap: 4px; height: 26px; }
.col.two { padding-top: 5px; }
.col.two button { height: 32px; }
.g-new { width: 109px; } .g-new .tools { padding-left: 11px; }
.g-del { width: 200px; } .g-del .tools { padding-left: 12px; } .g-del .col { width: 88px; }
.g-rep { width: 57px; } .g-rep .tools { padding-left: 5px; }
.g-resp { width: 231px; } .g-resp .tools { padding-left: 5px; } .g-resp .col { padding-left: 5px; }
.g-qs { width: 295px; } .g-qs .tools { padding: 2px 11px 0 9px; }
.g-move { width: 140px; } .g-move .tools { padding-left: 12px; }
.g-tags { width: 166px; } .g-tags .tools { padding-left: 7px; } .g-tags .col { padding-left: 5px; }
.g-find { width: 121px; } .g-find .tools { padding-left: 8px; } .g-find .col button { padding-left: 3px; }
.g-sp { width: 58px; } .g-la { width: 67px; } .g-ap { width: 58px; }
.g-sp .tools, .g-la .tools, .g-ap .tools { justify-content: center; }
.people { width: 105px; height: 22px; padding: 0 4px; border: 1px solid #666; border-radius: 4px; margin-bottom: 2px; }
.people::placeholder { color: #444; opacity: 1; }
.gallery { display: grid; grid-template-columns: 124px 1fr 23px; grid-template-rows: repeat(3, 24px); width: 100%; border: 1px solid #777; border-radius: 4px; font-size: 11px; }
.gallery button { display: flex; align-items: center; gap: 4px; padding-left: 5px; }
.gallery .drop { grid-column: 3; grid-row: 1 / 4; border-left: 1px solid #777; padding: 0; justify-content: center; }
.collapse { margin: auto 0 4px 13px; }
.qat { display: flex; align-items: center; height: 36px; padding-left: 7px; gap: 19px; font-size: 11px; }
.qat button { display: flex; align-items: center; gap: 4px; }

.panel { flex: 1; min-height: 0; margin-top: 6px; display: grid; grid-template-columns: 49px 1fr 224px 30px; background: #656565; border: 1px solid #6f6f6f; border-bottom: 0; border-radius: 8px 8px 0 0; overflow: hidden; }
.folders { background: #3b3b3b; width: 47px; display: flex; flex-direction: column; align-items: flex-end; }
.folders button { writing-mode: vertical-rl; transform: rotate(180deg); width: 42px; line-height: 40px; text-align: left; font-weight: 700; font-size: 11px; padding: 7px 0; }
.folders .exp { width: 42px; padding: 20px 0 18px; height: 48px; display: flex; align-items: center; transform: none; justify-content: center; }
.folders .on { background: #444; color: #d8e8ff; }
.folders span { color: #cfe0ee; }
.folders .cnt { font-weight: 400; }

.mail { display: flex; flex-direction: column; min-width: 0; border-right: 1px solid #484848; }
.list { flex: 1; padding-right: 23px; }
.filter { display: flex; align-items: flex-start; height: 47px; padding: 18px 0 0 27px; font-size: 14px; line-height: 22px; border-bottom: 1px solid #484848; gap: 20px; }
.filter button { height: 28px; }
.filter .on { border-bottom: 2px solid #b5daf3; color: #d8e8f2; }
.filter .sort { margin-left: auto; font-size: 12px; display: flex; align-items: center; gap: 4px; }
.filter .dir { padding-right: 7px; margin-left: -4px; display: flex; align-items: center; }
table { width: 100%; table-layout: fixed; border-collapse: collapse; font-size: 11px; line-height: 15px; }
.c32 { width: 32px; } .c19 { width: 19px; } .c26 { width: 26px; } .c57 { width: 57px; } .c285 { width: 285px; } .c77 { width: 77px; } .c38 { width: 38px; } .c71 { width: 71px; } .c42 { width: 42px; }
th { height: 25px; padding: 0 0 0 4px; text-align: left; font-weight: 400; color: #bdbdbd; white-space: nowrap; background: linear-gradient(#484848, #484848) 100% 50% / 1px 18px no-repeat; }
th.imp { text-align: right; padding-right: 3px; font-weight: 700; color: #eee; }
th.ic { padding-left: 3px; }
th:last-child { background: none; }
th svg { vertical-align: middle; }
td { padding: 0; white-space: nowrap; }
.grp td { background: #424242; height: 24px; padding: 0 0 1px 8px; font-weight: 700; }
.grp svg { vertical-align: middle; margin: -2px 7px 0 0; }
.msg { background: #d3d3d3; color: #262626; }
.msg td { vertical-align: top; height: 21px; padding: 4px 0 0 2px; }
.msg tr:first-child td { border-top: 1px solid #eee; }
.msg tr + tr td { height: 22px; padding-top: 0; color: #4c4c4c; border-bottom: 1px solid #eee; }
.msg td.subj { padding-left: 130px; }
.focus tr td:first-child { border-left: 1px dotted #222; }
.focus tr td:last-child { border-right: 1px dotted #222; }
.msg.focus tr:first-child td { border-top: 1px dotted #222; }
.msg.focus tr + tr td { border-bottom: 1px dotted #222; }
.sel { background: #b8b8b8; }
.snip { display: flex; }
.lead { flex: 0 0 187px; }
.gap { padding-left: 32px; } .gap2 { padding-left: 10px; } .dots { padding-left: 415px; }
.redact { width: 126px; height: 18px; margin: -1px 5px -2px 3px; background: #c0c0c0; }
.more { text-align: center; font-size: 11px; font-weight: 600; padding-top: 10px; }
.more p { font-weight: 600; }
.more a { display: inline-block; color: #fff; margin-top: 9px; font-weight: 600; }

.read { flex: none; height: 187px; border-top: 1px solid #6f6f6f; display: flex; flex-direction: column; }
.subjectline { display: flex; justify-content: space-between; align-items: center; height: 52px; padding: 16px 23px 0 44px; }
h1 { font-size: 18px; line-height: 24px; display: flex; }
h1 span { width: 243px; }
.sum { display: flex; align-items: center; gap: 7px; height: 32px; padding: 0 10px; background: #0f6cbd; border: 1px solid #2b88d8; border-radius: 4px; }
.head { display: flex; padding: 4px 23px 0 19px; height: 70px; }
.avatar { width: 48px; height: 48px; margin-top: 10px; border-radius: 50%; background: #7a7070; display: flex; align-items: center; justify-content: center; font-size: 20px; }
.who { padding: 15px 0 0 11px; flex: 1; }
.name { font-size: 14px; line-height: 22px; display: flex; }
.name span { width: 212px; } .name i { width: 118px; height: 18px; background: #717171; }
.to { display: flex; gap: 9px; line-height: 16px; } .to i { width: 30px; height: 20px; background: #777; }
.acts { text-align: right; }
.btns { display: flex; gap: 10px; padding-top: 1px; }
.seg { display: flex; }
.btns button { height: 31px; display: flex; align-items: center; gap: 8px; padding: 0 10px; background: #d3d3d3; color: #262626; border: 1px solid #8a8a8a; }
.seg button + button { margin-left: -1px; }
.seg button:first-child { border-radius: 4px 0 0 4px; } .seg button:last-child { border-radius: 0 4px 4px 0; }
.btns .dotb { width: 31px; padding: 0 6px; border-radius: 4px; }
.acts time { display: block; margin-top: 4px; font-size: 11px; }
.info { display: flex; align-items: center; gap: 2px; height: 22px; padding-left: 19px; margin-bottom: auto; font-size: 11px; }
.info .i1 { width: 393px; }
.body { display: flex; height: 32px; margin: 0 1px; flex: none; }
.page { flex: 1; background: #e6f3fb; display: flex; align-items: flex-end; padding: 0 276px 0 140px; }
.sheet { flex: 1; height: 13px; background: #fff; }
.vs { width: 17px; background: #f0f0f0; display: flex; flex-direction: column; justify-content: space-around; align-items: center; }
.hs { height: 17px; margin: 0 1px; background: #f5f5f5; display: flex; align-items: center; gap: 6px; padding: 0 22px 0 5px; flex: none; }
.hs .thumb { flex: 1; height: 9px; border-radius: 5px; background: #6d6d6d; }

.tasks { padding: 22px 0 0 14px; font-size: 11px; overflow: hidden; display: flex; flex-direction: column; }
.arr { display: flex; align-items: center; height: 17px; color: #bdbdbd; padding: 0 2px 0 3px; border-bottom: 1px solid #484848; flex: none; margin-right: 1px; }
.arr .later { border-left: 1px solid #484848; padding-left: 4px; margin: 0 auto 0 3px; }
.newtask { flex: none; height: 20px; margin: 1px 3px 2px 2px; padding-left: 5px; background: #d3d3d3; border: 1px solid #333; }
.newtask::placeholder { color: #777; opacity: 1; }
h3 { flex: none; height: 28px; background: #424242; font-weight: 700; font-size: 11px; display: flex; align-items: center; border-top: 1px solid #777; margin-right: 1px; padding: 3px 0 0 8px; }
.tasks h3 .rflag { margin: 0 7px 4px 8px; }
.tasks ul { margin-right: 1px; color: #262626; background: #d3d3d3; flex: none; }
.tasks li { display: flex; align-items: center; justify-content: space-between; height: 21px; padding: 0 2px 0 6px; }
.tasks .due { color: #b3001e; }
.tscroll { display: flex; flex-direction: column; align-items: center; padding: 6px 0 0 1px; min-height: 0; }
.tscroll button { height: 15px; width: 10px; }
.track { flex: 1; width: 17px; background: #3c3c3c; border-radius: 9px; margin-bottom: 3px; display: flex; flex-direction: column; align-items: center; padding: 5px 0 3px; }
.track .thumb { width: 9px; height: 65%; margin: 4px 0 auto; border-radius: 5px; background: #bdbdbd; }

.status { flex: none; height: 23px; display: flex; align-items: center; border-top: 1px solid #383838; padding: 0 8px 0 12px; font-size: 11px; font-weight: 600; }
.rem { display: flex; align-items: center; gap: 2px; margin-left: 16px; }
.upd { margin-left: auto; } .conn { margin: 0 21px 0 18px; }
.disp { display: flex; align-items: center; gap: 4px; font-weight: 400; margin-right: 11px; }
.view { width: 40px; height: 22px; display: flex; align-items: center; justify-content: center; }
.view.on { background: #5c5c5c; }
.zoom { display: flex; align-items: center; gap: 5px; margin-left: 8px; font-size: 14px; font-weight: 400; }
.zoom input { appearance: none; width: 100px; height: 1px; background: #ccc; }
.zoom input::-webkit-slider-thumb { appearance: none; width: 4px; height: 11px; background: #ddd; }
.pct { margin-left: 12px; font-weight: 400; }
.taskbar { flex: none; height: 40px; background: #262728; display: flex; }
.taskbar button { display: flex; align-items: center; justify-content: center; width: 49px; }
.taskbar .sys { width: 48px; }
.taskbar .sys + .open { margin-left: 2px; }
.taskbar .open { background: linear-gradient(#6fd6c8, #6fd6c8) 50% 100% / 40px 2px no-repeat; }
.taskbar .cur { background: linear-gradient(#6fd6c8, #6fd6c8) 50% 100% / 100% 2px no-repeat #505050; }
.clock { margin-left: auto; padding: 2px 8px 0 0; text-align: center; line-height: 18px; font-size: 12px; }

.menu { position: absolute; background: #bcbcbc; border: 1px solid #666; color: #262626; box-shadow: 1px 1px 3px #5558; font-size: 12px; padding: 1px; }
.menu button { display: flex; align-items: center; width: 100%; height: 28px; padding: 0 6px 0 11px; gap: 9px; }
.menu span { flex: 1; text-align: left; }
.menu .on { background: #d0d0d0; }
.menu hr { height: 1px; border: 0; background: #848484; margin: 1px 0 1px 32px; }
.menu u { text-underline-offset: 2px; }
.ctx { left: 229px; top: 302px; width: 165px; }
.sub { left: 393px; top: 742px; width: 147px; }
.cursor { position: absolute; left: 508px; top: 784px; }
.mark { position: absolute; right: 30px; bottom: 33px; display: flex; align-items: flex-start; gap: 3px; opacity: .6; filter: drop-shadow(1px 2px 2px #000); font: 400 50px/34px "DejaVu Sans", sans-serif; -webkit-text-stroke: 1px #fff; }
```
